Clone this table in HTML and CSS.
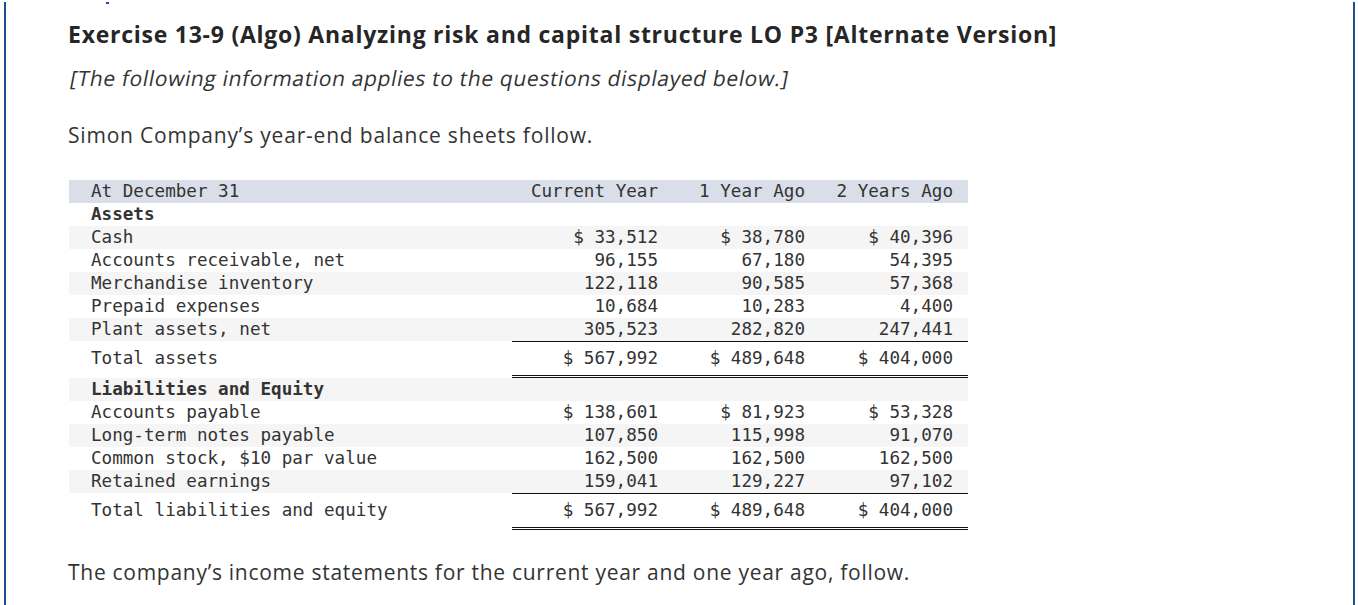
FILE: index.html
```html
<!DOCTYPE html>
<html lang="en">
<head>
<meta charset="utf-8">
<title>Exercise 13-9 (Algo)</title>
<link rel="stylesheet" href="styles.css">
</head>
<body>
<div class="frame">
  <span class="dot"></span>
  <div class="content">
    <h1 class="title">Exercise 13-9 (Algo) Analyzing risk and capital structure LO P3 [Alternate Version]</h1>
    <p class="note"><span class="slant">[The following information applies to the questions displayed below.]</span></p>
    <p class="lead">Simon Company’s year-end balance sheets follow.</p>
    <table class="bs">
      <colgroup>
        <col class="c-label">
        <col class="c-cur">
        <col class="c-v">
        <col class="c-v2">
      </colgroup>
      <thead>
        <tr class="head">
          <th class="lbl">At December 31</th>
          <th class="num">Current Year</th>
          <th class="num">1 Year Ago</th>
          <th class="num">2 Years Ago</th>
        </tr>
      </thead>
      <tbody>
        <tr><td class="lbl strong">Assets</td><td class="num"></td><td class="num"></td><td class="num"></td></tr>
        <tr><td class="lbl">Cash</td><td class="num">$ 33,512</td><td class="num">$ 38,780</td><td class="num">$ 40,396</td></tr>
        <tr><td class="lbl">Accounts receivable, net</td><td class="num">96,155</td><td class="num">67,180</td><td class="num">54,395</td></tr>
        <tr><td class="lbl">Merchandise inventory</td><td class="num">122,118</td><td class="num">90,585</td><td class="num">57,368</td></tr>
        <tr><td class="lbl">Prepaid expenses</td><td class="num">10,684</td><td class="num">10,283</td><td class="num">4,400</td></tr>
        <tr><td class="lbl">Plant assets, net</td><td class="num">305,523</td><td class="num">282,820</td><td class="num">247,441</td></tr>
        <tr class="total"><td class="lbl">Total assets</td><td class="num">$ 567,992</td><td class="num">$ 489,648</td><td class="num">$ 404,000</td></tr>
        <tr><td class="lbl strong">Liabilities and Equity</td><td class="num"></td><td class="num"></td><td class="num"></td></tr>
        <tr><td class="lbl">Accounts payable</td><td class="num">$ 138,601</td><td class="num">$ 81,923</td><td class="num">$ 53,328</td></tr>
        <tr><td class="lbl">Long-term notes payable</td><td class="num">107,850</td><td class="num">115,998</td><td class="num">91,070</td></tr>
        <tr><td class="lbl">Common stock, $10 par value</td><td class="num">162,500</td><td class="num">162,500</td><td class="num">162,500</td></tr>
        <tr><td class="lbl">Retained earnings</td><td class="num">159,041</td><td class="num">129,227</td><td class="num">97,102</td></tr>
        <tr class="total"><td class="lbl">Total liabilities and equity</td><td class="num">$ 567,992</td><td class="num">$ 489,648</td><td class="num">$ 404,000</td></tr>
      </tbody>
    </table>
    <p class="lead after">The company’s income statements for the current year and one year ago, follow.</p>
  </div>
</div>
</body>
</html>
```
FILE: styles.css
```css
html, body {
  margin: 0;
  padding: 0;
  background: #ffffff;
}

body {
  font-family: "Open Sans", "Lato", sans-serif;
  color: #333333;
}

.frame {
  position: relative;
  margin: 2px 3px 0 4px;
  height: 603px;
  border-left: 2px solid #1b4f8f;
  border-right: 2px solid #1b4f8f;
  box-sizing: border-box;
}

.dot {
  position: absolute;
  left: 100px;
  top: 0;
  width: 3px;
  height: 2px;
  background: #1b4f8f;
}

.content {
  padding: 18px 0 0 62px;
}

.title {
  margin: 0;
  font-size: 23px;
  line-height: 28px;
  font-weight: 700;
  letter-spacing: 0.75px;
  color: #262626;
}

.note {
  margin: 17px 0 0;
  font-size: 21px;
  line-height: 26px;
  letter-spacing: 0.65px;
  color: #333333;
}

.slant {
  display: inline-block;
  transform: skewX(-11deg);
  transform-origin: 0 100%;
}

.lead {
  margin: 31px 0 0;
  font-size: 21px;
  line-height: 26px;
  letter-spacing: 0.8px;
  color: #333333;
}

.lead.after {
  margin-top: 29px;
  letter-spacing: 0.72px;
}

.bs {
  margin: 32px 0 0 1px;
  width: 899px;
  table-layout: fixed;
  border-collapse: separate;
  border-spacing: 0;
  font-family: "DejaVu Sans Mono", "Liberation Mono", monospace;
  font-size: 17.6px;
  letter-spacing: 0;
  color: #333333;
}

.c-label { width: 443px; }
.c-cur { width: 161px; }
.c-v { width: 147px; }
.c-v2 { width: 148px; }

.bs th,
.bs td {
  height: 23px;
  padding: 0;
  line-height: 23px;
  white-space: nowrap;
  font-weight: 400;
  vertical-align: middle;
}

.bs .lbl {
  text-align: left;
  padding-left: 22px;
}

.bs .num {
  text-align: right;
  padding-right: 15px;
}

.bs .strong {
  font-weight: 700;
}

.head th {
  background: #d9dee8;
}

.bs tbody tr:nth-child(even) td {
  background: #f5f5f5;
}

.bs tr.total td {
  height: 33px;
  line-height: 33px;
  border-top: 1px solid transparent;
  border-bottom: 3px solid transparent;
}

.bs tr.total td.num {
  border-top: 1px solid #111111;
  border-bottom: 3px double #111111;
}
```
